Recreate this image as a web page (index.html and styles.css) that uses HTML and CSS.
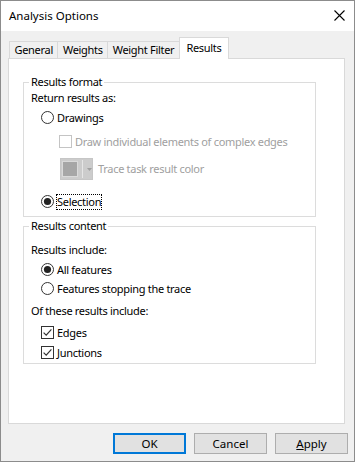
FILE: index.html
```html
<!DOCTYPE html>
<html>
<head>
    <meta charset="utf-8" />
    <title>Analysis Options</title>
    <link rel="stylesheet" href="styles.css">
</head>
<body>
    <div class="window">
        <div class="titlebar">
            <span class="title">Analysis Options</span>
            <svg class="close" width="11" height="11" viewBox="0 0 11 11">
                <path d="M0.5 0.5L10.5 10.5M10.5 0.5L0.5 10.5" stroke="#000" stroke-width="1.1" fill="none" />
            </svg>
        </div>
        <div class="client">
            <div class="tabs">
                <div class="tab">General</div>
                <div class="tab">Weights</div>
                <div class="tab">Weight Filter</div>
                <div class="tab active">Results</div>
            </div>
            <div class="page">
                <fieldset class="group group-format">
                    <legend>Results format</legend>
                    <div class="label">Return results as:</div>
                    <div class="option opt-drawings">
                        <svg class="mark" width="13" height="13" viewBox="0 0 13 13"><circle cx="6.5" cy="6.5" r="6" fill="#fff" stroke="#333" /></svg>
                        <span class="text">Drawings</span>
                    </div>
                    <div class="option sub opt-elements disabled">
                        <svg class="mark" width="13" height="13" viewBox="0 0 13 13"><rect x="0.5" y="0.5" width="12" height="12" fill="#fff" stroke="#c4c4c4" /></svg>
                        <span class="text">Draw individual elements of complex edges</span>
                    </div>
                    <div class="color-row disabled">
                        <div class="color-btn">
                            <span class="swatch"></span>
                            <span class="divider"></span>
                            <svg class="arrow" width="5" height="3" viewBox="0 0 5 3"><path d="M0 0H5L2.5 3Z" fill="#a0a0a0" /></svg>
                        </div>
                        <span class="text">Trace task result color</span>
                    </div>
                    <div class="option opt-selection">
                        <svg class="mark" width="13" height="13" viewBox="0 0 13 13"><circle cx="6.5" cy="6.5" r="6" fill="#fff" stroke="#333" /><circle cx="6.5" cy="6.5" r="3.6" fill="#222" /></svg>
                        <span class="text focus">Selection</span>
                    </div>
                </fieldset>

                <fieldset class="group group-content">
                    <legend>Results content</legend>
                    <div class="label lbl-include">Results include:</div>
                    <div class="option opt-all">
                        <svg class="mark" width="13" height="13" viewBox="0 0 13 13"><circle cx="6.5" cy="6.5" r="6" fill="#fff" stroke="#333" /><circle cx="6.5" cy="6.5" r="3.6" fill="#222" /></svg>
                        <span class="text">All features</span>
                    </div>
                    <div class="option">
                        <svg class="mark" width="13" height="13" viewBox="0 0 13 13"><circle cx="6.5" cy="6.5" r="6" fill="#fff" stroke="#333" /></svg>
                        <span class="text">Features stopping the trace</span>
                    </div>
                    <div class="label lbl-these">Of these results include:</div>
                    <div class="option opt-edges">
                        <svg class="mark" width="13" height="13" viewBox="0 0 13 13"><rect x="0.5" y="0.5" width="12" height="12" fill="#fff" stroke="#333" /><path d="M2.6 6.6L5.2 9.2L10.4 3.4" fill="none" stroke="#333" stroke-width="1.2" /></svg>
                        <span class="text">Edges</span>
                    </div>
                    <div class="option opt-junctions">
                        <svg class="mark" width="13" height="13" viewBox="0 0 13 13"><rect x="0.5" y="0.5" width="12" height="12" fill="#fff" stroke="#333" /><path d="M2.6 6.6L5.2 9.2L10.4 3.4" fill="none" stroke="#333" stroke-width="1.2" /></svg>
                        <span class="text">Junctions</span>
                    </div>
                </fieldset>
            </div>
            <div class="buttons">
                <button type="button" class="btn default">OK</button>
                <button type="button" class="btn">Cancel</button>
                <button type="button" class="btn"><u>A</u>pply</button>
            </div>
        </div>
    </div>
</body>
</html>
```

FILE: styles.css
```css
body {
    margin: 0;
    background-color: #fff;
    font-family: "Segoe UI", "Noto Sans", sans-serif;
    font-size: 11px;
    letter-spacing: -0.3px;
    color: #000;
}

.window {
    width: 355px;
    height: 462px;
    box-sizing: border-box;
    border: 1px solid #8c8c8c;
    background-color: #f0f0f0;
    display: flex;
    flex-direction: column;
}

.titlebar {
    height: 30px;
    background-color: #fff;
    display: flex;
    align-items: center;
    justify-content: space-between;
    padding: 0 9px 0 8px;
}

.title {
    font-size: 11.5px;
    letter-spacing: 0;
    line-height: 16px;
}

.close {
    margin-top: -1px;
}

.client {
    flex: 1;
    padding-top: 7px;
}

.tabs {
    display: flex;
    align-items: flex-end;
    height: 20px;
    margin-left: 8px;
}

.tab {
    height: 16px;
    line-height: 16px;
    padding: 0 4.5px;
    border: 1px solid #d9d9d9;
    border-bottom: none;
    margin-right: -1px;
    background-color: #f0f0f0;
}

.tab.active {
    position: relative;
    height: 21px;
    line-height: 19px;
    padding: 0 6.5px;
    margin-bottom: -1px;
    background-color: #fff;
}

.page {
    width: 337px;
    height: 366px;
    box-sizing: border-box;
    margin-left: 7px;
    border: 1px solid #d9d9d9;
    background-color: #fff;
    padding: 15px 0 0 14px;
}

.group {
    width: 293px;
    box-sizing: border-box;
    margin: 0;
    border: 1px solid #dcdcdc;
    padding: 0 0 0 7px;
}

.group legend {
    padding: 0 2px;
    margin-left: -2px;
    line-height: 16px;
}

.group-format {
    padding-bottom: 5px;
}

.group-content {
    margin-top: 1px;
    padding-bottom: 1px;
}

.label {
    height: 16px;
    line-height: 16px;
}

.lbl-include {
    margin-top: 8px;
}

.lbl-these {
    margin-top: 5px;
}

.option {
    display: flex;
    align-items: center;
    height: 19px;
    padding-left: 10px;
}

.option .mark {
    flex: none;
    margin-right: 2px;
}

.option .text {
    line-height: 14px;
    border: 1px solid transparent;
    white-space: nowrap;
}

.option .focus {
    border: 1px dotted #000;
}

.opt-drawings {
    margin-top: 2px;
}

.opt-elements {
    padding-left: 28px;
    margin-top: 5px;
}

.opt-selection {
    margin-top: 12px;
}

.opt-all {
    margin-top: 2px;
}

.opt-edges {
    margin-top: 4px;
}

.opt-junctions {
    margin-top: 1px;
}

.disabled .text {
    color: #a0a0a0;
}

.color-row {
    display: flex;
    align-items: center;
    margin-top: 7px;
    padding-left: 29px;
}

.color-btn {
    width: 33px;
    height: 22px;
    box-sizing: border-box;
    background-color: #cccccc;
    border: 1px solid #c6c6c6;
    display: flex;
    align-items: center;
    padding-left: 1px;
}

.swatch {
    width: 14px;
    height: 14px;
    background-color: #a6a6a6;
    border: 1px solid #dadada;
}

.divider {
    width: 1px;
    height: 18px;
    background-color: #e6e6e6;
    margin-left: 4px;
}

.arrow {
    margin-left: 4px;
}

.color-row .text {
    margin-left: 5px;
    line-height: 16px;
}

.buttons {
    display: flex;
    justify-content: flex-end;
    gap: 8px;
    padding: 9px 6px 0 0;
}

.btn {
    width: 73px;
    height: 21px;
    box-sizing: border-box;
    padding: 0;
    font-family: inherit;
    font-size: 11.5px;
    letter-spacing: 0;
    color: #000;
    background-color: #e1e1e1;
    border: 1px solid #adadad;
}

.btn.default {
    border: 2px solid #0078d7;
}
```
